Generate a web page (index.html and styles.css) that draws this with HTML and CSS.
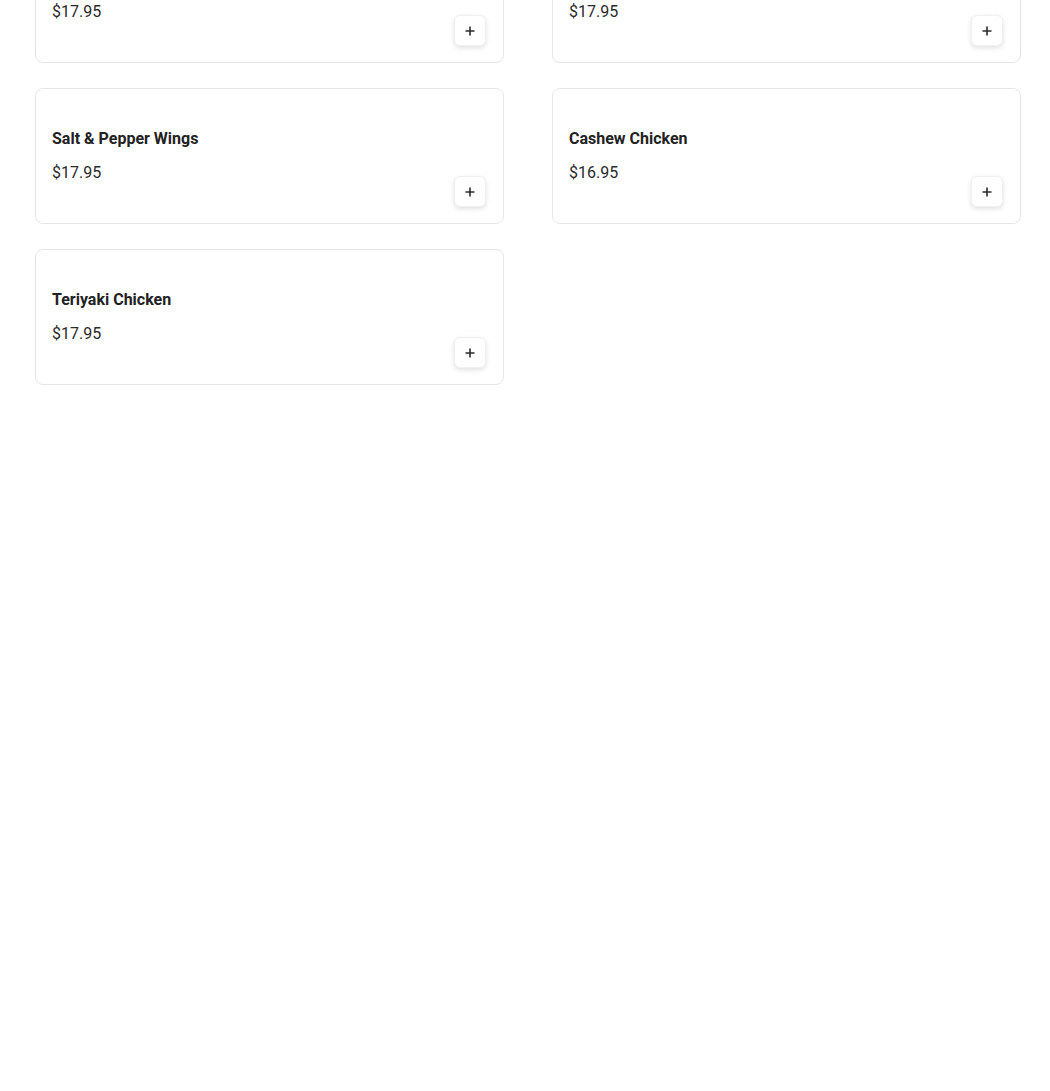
FILE: index.html
```html
<!DOCTYPE html>
<html>
<head>
<meta charset="utf-8">
<link rel="stylesheet" href="styles.css">
</head>
<body>
<div class="grid">
  <div class="card">
    <div class="title">Sweet &amp; Sour Chicken</div>
    <div class="row"><div class="price">$17.95</div><button class="add"><svg width="12" height="12" viewBox="0 0 12 12"><path d="M6 1.5v9M1.5 6h9" stroke="#2b2b2b" stroke-width="1.6"/></svg></button></div>
  </div>
  <div class="card">
    <div class="title">Orange Chicken</div>
    <div class="row"><div class="price">$17.95</div><button class="add"><svg width="12" height="12" viewBox="0 0 12 12"><path d="M6 1.5v9M1.5 6h9" stroke="#2b2b2b" stroke-width="1.6"/></svg></button></div>
  </div>
  <div class="card">
    <div class="title">Salt &amp; Pepper Wings</div>
    <div class="row"><div class="price">$17.95</div><button class="add"><svg width="12" height="12" viewBox="0 0 12 12"><path d="M6 1.5v9M1.5 6h9" stroke="#2b2b2b" stroke-width="1.6"/></svg></button></div>
  </div>
  <div class="card">
    <div class="title">Cashew Chicken</div>
    <div class="row"><div class="price">$16.95</div><button class="add"><svg width="12" height="12" viewBox="0 0 12 12"><path d="M6 1.5v9M1.5 6h9" stroke="#2b2b2b" stroke-width="1.6"/></svg></button></div>
  </div>
  <div class="card">
    <div class="title">Teriyaki Chicken</div>
    <div class="row"><div class="price">$17.95</div><button class="add"><svg width="12" height="12" viewBox="0 0 12 12"><path d="M6 1.5v9M1.5 6h9" stroke="#2b2b2b" stroke-width="1.6"/></svg></button></div>
  </div>
</div>
</body>
</html>
```
FILE: styles.css
```css
html, body {
  margin: 0;
  padding: 0;
  background: #fff;
  font-family: Roboto, "Liberation Sans", sans-serif;
  overflow: hidden;
}
.grid {
  display: grid;
  grid-template-columns: 469px 469px;
  column-gap: 48px;
  row-gap: 25px;
  margin-top: -73px;
  padding-left: 35px;
}
.card {
  border: 1px solid #e6e6e6;
  border-radius: 8px;
  padding: 16px;
  display: flex;
  flex-direction: column;
  height: 136px;
  box-sizing: border-box;
}
.title {
  margin-top: 22px;
  font-size: 16px;
  line-height: 24px;
  font-weight: 700;
  color: #222;
}
.row {
  margin-top: 10px;
  display: flex;
  justify-content: space-between;
}
.price {
  font-size: 16px;
  line-height: 24px;
  color: #2a2a2a;
}
.add {
  margin-top: 15px;
  margin-right: 1px;
  width: 32px;
  height: 31px;
  border: 1px solid #f0f0f0;
  border-radius: 6px;
  background: #fff;
  box-shadow: 0 2px 5px rgba(0,0,0,0.12);
  display: flex;
  align-items: center;
  justify-content: center;
  padding: 0;
}
```
